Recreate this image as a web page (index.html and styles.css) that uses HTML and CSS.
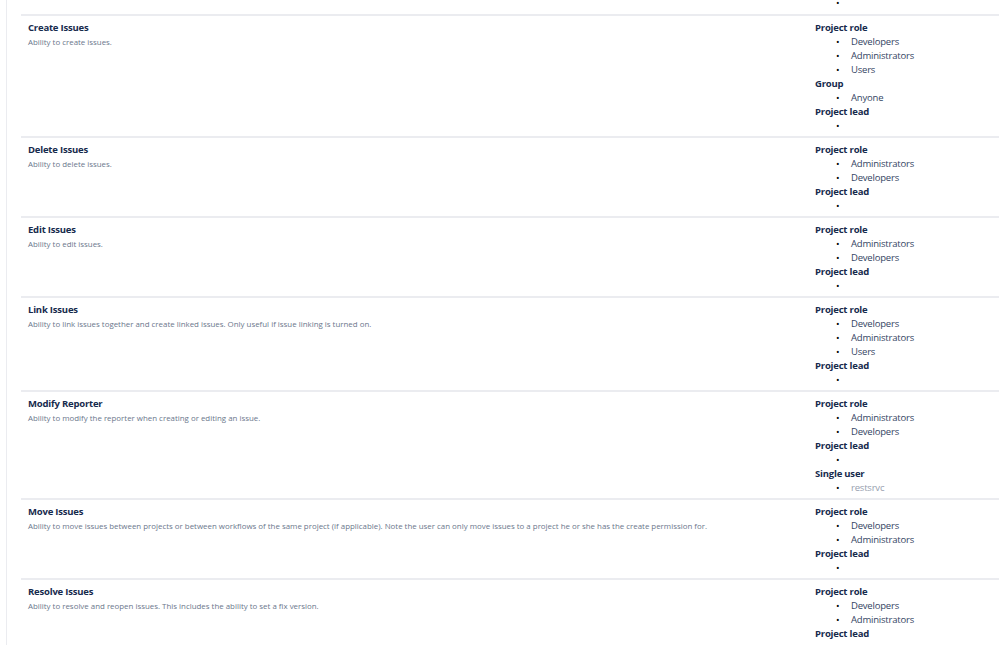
FILE: index.html
```html
<!DOCTYPE html>
<html>
<head>
<meta charset="utf-8">
<link rel="stylesheet" href="styles.css">
</head>
<body>
<div class="page">
  <div class="table">
    <div class="row first">
      <div class="perm"></div>
      <div class="grants">
        <ul class="items"><li></li></ul>
      </div>
    </div>

    <div class="row">
      <div class="perm">
        <div class="title">Create Issues</div>
        <div class="desc">Ability to create issues.</div>
      </div>
      <div class="grants">
        <div class="gtype">Project role</div>
        <ul class="items"><li>Developers</li><li>Administrators</li><li>Users</li></ul>
        <div class="gtype">Group</div>
        <ul class="items"><li>Anyone</li></ul>
        <div class="gtype">Project lead</div>
        <ul class="items"><li></li></ul>
      </div>
    </div>

    <div class="row">
      <div class="perm">
        <div class="title">Delete Issues</div>
        <div class="desc">Ability to delete issues.</div>
      </div>
      <div class="grants">
        <div class="gtype">Project role</div>
        <ul class="items"><li>Administrators</li><li>Developers</li></ul>
        <div class="gtype">Project lead</div>
        <ul class="items"><li></li></ul>
      </div>
    </div>

    <div class="row">
      <div class="perm">
        <div class="title">Edit Issues</div>
        <div class="desc">Ability to edit issues.</div>
      </div>
      <div class="grants">
        <div class="gtype">Project role</div>
        <ul class="items"><li>Administrators</li><li>Developers</li></ul>
        <div class="gtype">Project lead</div>
        <ul class="items"><li></li></ul>
      </div>
    </div>

    <div class="row">
      <div class="perm">
        <div class="title">Link Issues</div>
        <div class="desc">Ability to link issues together and create linked issues. Only useful if issue linking is turned on.</div>
      </div>
      <div class="grants">
        <div class="gtype">Project role</div>
        <ul class="items"><li>Developers</li><li>Administrators</li><li>Users</li></ul>
        <div class="gtype">Project lead</div>
        <ul class="items"><li></li></ul>
      </div>
    </div>

    <div class="row">
      <div class="perm">
        <div class="title">Modify Reporter</div>
        <div class="desc">Ability to modify the reporter when creating or editing an issue.</div>
      </div>
      <div class="grants">
        <div class="gtype">Project role</div>
        <ul class="items"><li>Administrators</li><li>Developers</li></ul>
        <div class="gtype">Project lead</div>
        <ul class="items"><li></li></ul>
        <div class="gtype">Single user</div>
        <ul class="items"><li class="inactive">restsrvc</li></ul>
      </div>
    </div>

    <div class="row">
      <div class="perm">
        <div class="title">Move Issues</div>
        <div class="desc">Ability to move issues between projects or between workflows of the same project (if applicable). Note the user can only move issues to a project he or she has the create permission for.</div>
      </div>
      <div class="grants">
        <div class="gtype">Project role</div>
        <ul class="items"><li>Developers</li><li>Administrators</li></ul>
        <div class="gtype">Project lead</div>
        <ul class="items"><li></li></ul>
      </div>
    </div>

    <div class="row">
      <div class="perm">
        <div class="title">Resolve Issues</div>
        <div class="desc">Ability to resolve and reopen issues. This includes the ability to set a fix version.</div>
      </div>
      <div class="grants">
        <div class="gtype">Project role</div>
        <ul class="items"><li>Developers</li><li>Administrators</li></ul>
        <div class="gtype">Project lead</div>
        <ul class="items"><li></li></ul>
      </div>
    </div>
  </div>
</div>
</body>
</html>
```

FILE: styles.css
```css
html, body {
  margin: 0;
  padding: 0;
  background: #ffffff;
  overflow: hidden;
  height: 645px;
}

body {
  font-family: "Open Sans", "Noto Sans", sans-serif;
  color: #172b4d;
}

.page {
  margin-left: 6px;
  border-left: 1px solid #ebecf0;
  min-height: 645px;
  padding-left: 14px;
}

.table {
  margin-top: -4px;
  width: 1000px;
}

.row {
  display: grid;
  grid-template-columns: 787px 1fr;
  border-top: 2px solid #ebecf0;
  padding: 5px 0 3px;
}

.row.first {
  border-top: none;
  padding-top: 0;
  padding-bottom: 4px;
}

.perm {
  padding-left: 7px;
}

.title {
  font-size: 9.5px;
  font-weight: 700;
  letter-spacing: -0.2px;
  line-height: 14px;
  color: #172b4d;
}

.desc {
  font-size: 7.9px;
  line-height: 15px;
  color: #6b778c;
}

.grants {
  padding-left: 7px;
  font-size: 9.5px;
  letter-spacing: -0.2px;
  line-height: 14px;
}

.gtype {
  font-weight: 700;
  color: #172b4d;
}

.items {
  list-style: none;
  margin: 0;
  padding: 0 0 0 21px;
}

.items li {
  display: flex;
  height: 14px;
  color: #344563;
}

.items li::before {
  content: "\2022";
  width: 15px;
  flex: none;
  color: #000000;
}

.items li.inactive {
  color: #97a0af;
}
```
